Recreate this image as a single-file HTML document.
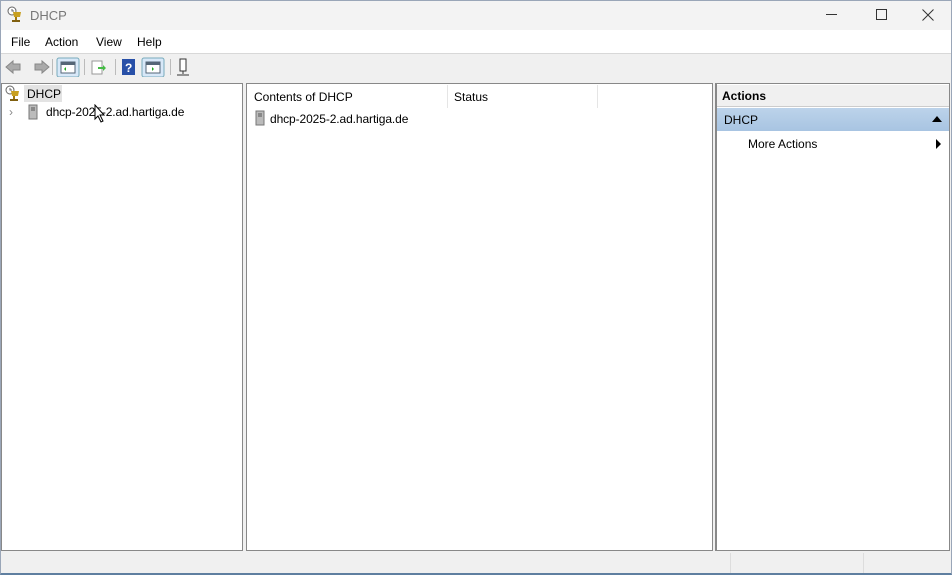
<!DOCTYPE html>
<html><head><style>
*{margin:0;padding:0;box-sizing:border-box}
body{width:952px;height:575px;overflow:hidden;background:#f0f0f0;font-family:"Liberation Sans",sans-serif;font-size:12px;color:#000;position:relative}
.a{position:absolute}
</style></head><body>
<div class="a" style="left:0;top:0;width:952px;height:575px;border:1px solid #9aa6b8;border-bottom:2px solid #5f7fa0"></div>
<!-- title -->
<div class="a" style="left:1px;top:1px;width:950px;height:29px;background:#f3f3f3"></div>
<svg class="a" style="left:7px;top:6px" width="18" height="18" viewBox="0 0 18 18"><circle cx="5" cy="5" r="4" fill="#fff" stroke="#666"/><path d="M5 3v2h2" stroke="#666" fill="none"/><path d="M6 6h8l-1 5h-6z" fill="#c8a020"/><rect x="8" y="11" width="2" height="3" fill="#a07810"/><rect x="5" y="14" width="8" height="2" fill="#806010"/></svg>
<div class="a" style="left:30px;top:8px;color:#777;font-size:13px">DHCP</div>
<div class="a" style="left:826px;top:14px;width:11px;height:1px;background:#333"></div>
<div class="a" style="left:876px;top:9px;width:11px;height:11px;border:1px solid #333"></div>
<svg class="a" style="left:922px;top:9px" width="12" height="12"><path d="M0.5 0.5l11 11M11.5 0.5l-11 11" stroke="#333" stroke-width="1"/></svg>
<!-- menu -->
<div class="a" style="left:1px;top:30px;width:950px;height:24px;background:#fff;border-bottom:1px solid #d8d8d8"></div>
<div class="a" style="left:11px;top:35px;font-size:12px">File</div>
<div class="a" style="left:45px;top:35px;font-size:12px">Action</div>
<div class="a" style="left:96px;top:35px;font-size:12px">View</div>
<div class="a" style="left:137px;top:35px;font-size:12px">Help</div>
<!-- toolbar -->
<svg class="a" style="left:4px;top:57px" width="190" height="20" viewBox="0 0 190 20">
<path d="M2 10l7-6v3h7v6h-7v3z" fill="#aaa" stroke="#888"/>
<path d="M45 10l-7-6v3h-7v6h7v3z" fill="#aaa" stroke="#888"/>
<rect x="48" y="2" width="1" height="16" fill="#bbb"/>
<rect x="53" y="1" width="22" height="19" rx="2" fill="#d8e8f8" stroke="#7ab"/>
<rect x="57" y="5" width="14" height="11" fill="#fff" stroke="#567"/><rect x="57" y="5" width="14" height="3" fill="#567"/><path d="M62 10l-2 2 2 2z" fill="#2a2"/>
<rect x="80" y="2" width="1" height="16" fill="#bbb"/>
<rect x="88" y="4" width="10" height="13" fill="#fff" stroke="#999"/><path d="M94 10h5v-2l3 3-3 3v-2h-5z" fill="#4b4"/>
<rect x="111" y="2" width="1" height="16" fill="#bbb"/>
<rect x="118" y="2" width="13" height="16" fill="#2850a8"/><text x="121" y="15" fill="#fff" font-size="12" font-weight="bold" font-family="Liberation Sans">?</text>
<rect x="138" y="1" width="22" height="19" rx="2" fill="#d8e8f8" stroke="#7ab"/>
<rect x="142" y="5" width="14" height="11" fill="#fff" stroke="#567"/><rect x="142" y="5" width="14" height="3" fill="#567"/><path d="M148 10l2 2-2 2z" fill="#2a2"/>
<rect x="166" y="2" width="1" height="16" fill="#bbb"/>
<rect x="176" y="2" width="6" height="12" fill="#fff" stroke="#333"/><path d="M179 14v3M173 18h12" stroke="#333"/>
</svg>
<!-- panes -->
<div class="a" style="left:1px;top:83px;width:242px;height:468px;background:#fff;border:1px solid #888"></div>
<div class="a" style="left:246px;top:83px;width:467px;height:468px;background:#fff;border:1px solid #888"></div>
<div class="a" style="left:715px;top:83px;width:235px;height:468px;background:#fff;border:1px solid #888;border-left:2px solid #888"></div>
<!-- left tree -->
<div class="a" style="left:24px;top:85px;width:38px;height:17px;background:#e3e3e3"></div>
<svg class="a" style="left:5px;top:85px" width="18" height="18" viewBox="0 0 18 18"><circle cx="5" cy="5" r="4" fill="#fff" stroke="#666"/><path d="M5 3v2h2" stroke="#666" fill="none"/><path d="M6 6h8l-1 5h-6z" fill="#c8a020"/><rect x="8" y="11" width="2" height="3" fill="#a07810"/><rect x="5" y="14" width="8" height="2" fill="#806010"/></svg>
<div class="a" style="left:27px;top:87px;font-size:12px">DHCP</div>
<div class="a" style="left:9px;top:105px;color:#888;font-size:12px">›</div>
<svg class="a" style="left:28px;top:104px" width="10" height="16"><rect x="1" y="1" width="8" height="14" fill="#bbb" stroke="#777"/><path d="M3 4h4M3 6h4" stroke="#555"/></svg>
<div class="a" style="left:46px;top:105px;font-size:12px;letter-spacing:-0.1px">dhcp-2025-2.ad.hartiga.de</div>
<svg class="a" style="left:94px;top:104px" width="12" height="19"><path d="M1 1v14l3-3 3 6 2-1-3-6h4z" fill="#fff" stroke="#000"/></svg>
<!-- middle -->
<div class="a" style="left:254px;top:90px;font-size:12px">Contents of DHCP</div>
<div class="a" style="left:447px;top:85px;width:1px;height:23px;background:#e5e5e5"></div>
<div class="a" style="left:454px;top:90px;font-size:12px">Status</div>
<div class="a" style="left:597px;top:85px;width:1px;height:23px;background:#e5e5e5"></div>
<svg class="a" style="left:255px;top:110px" width="10" height="16"><rect x="1" y="1" width="8" height="14" fill="#bbb" stroke="#777"/><path d="M3 4h4M3 6h4" stroke="#555"/></svg>
<div class="a" style="left:270px;top:112px;font-size:12px;letter-spacing:-0.1px">dhcp-2025-2.ad.hartiga.de</div>
<!-- right -->
<div class="a" style="left:717px;top:85px;width:232px;height:22px;background:#f0f0f0;border-bottom:1px solid #ccc"></div>
<div class="a" style="left:722px;top:89px;font-weight:bold;font-size:12px">Actions</div>
<div class="a" style="left:717px;top:108px;width:232px;height:23px;background:linear-gradient(#bcd3ea,#a8c4e2)"></div>
<div class="a" style="left:724px;top:113px;font-size:12px">DHCP</div>
<div class="a" style="left:932px;top:116px;width:0;height:0;border-left:5px solid transparent;border-right:5px solid transparent;border-bottom:6px solid #000"></div>
<div class="a" style="left:748px;top:137px;font-size:12px">More Actions</div>
<div class="a" style="left:936px;top:139px;width:0;height:0;border-top:5px solid transparent;border-bottom:5px solid transparent;border-left:5px solid #000"></div>
<!-- status bar -->
<div class="a" style="left:730px;top:553px;width:1px;height:20px;background:#ddd"></div>
<div class="a" style="left:863px;top:553px;width:1px;height:20px;background:#ddd"></div>
</body></html>
